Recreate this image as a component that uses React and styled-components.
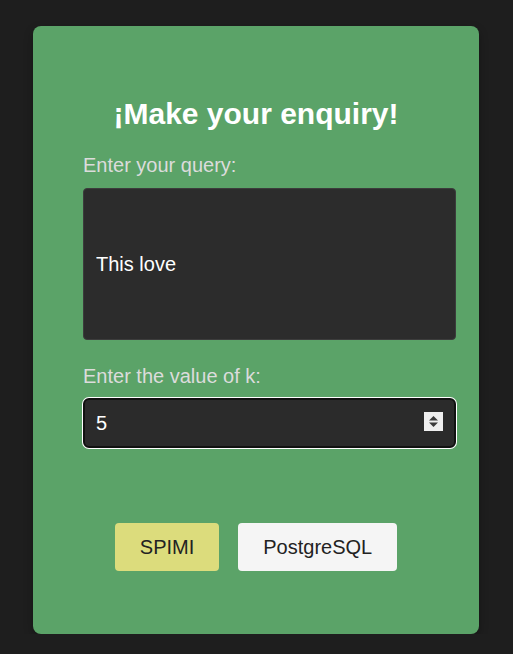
import React, {useState} from 'react';
import styled, {createGlobalStyle} from 'styled-components';

const GlobalStyle = createGlobalStyle`
  html, body, #root {
    min-height: 100%;
  }
  body {
    margin: 0;
    background: #1e1e1e;
    font-family: "Liberation Sans", Arial, sans-serif;
  }
`;

const Page = styled.div`
  display: flex;
  padding: 26px 0 0 33px;
`;

const Card = styled.div`
  width: 446px;
  box-sizing: border-box;
  padding: 71px 50px 63px;
  background: #5ba368;
  border-radius: 8px;
  box-shadow: 0 4px 10px rgba(0, 0, 0, 0.3);
  display: flex;
  flex-direction: column;
`;

const Title = styled.h1`
  margin: 0 0 23px;
  font-size: 30px;
  font-weight: bold;
  color: #fff;
  text-align: center;
  line-height: 34px;
`;

const Label = styled.label`
  font-size: 20px;
  line-height: 23px;
  color: #dcdcdc;
  margin-bottom: ${(props) => props.gap}px;
`;

// inputs spill past the right padding, as width: 100% plus their own padding does
const QueryBox = styled.input`
  box-sizing: border-box;
  width: calc(100% + 27px);
  height: 152px;
  margin: 0 0 25px;
  padding: 0 12px;
  background: #2c2c2c;
  border: 1px solid #3c3c3c;
  border-radius: 4px;
  color: #fff;
  font-family: inherit;
  font-size: 20px;
  outline: none;
`;

const Field = styled.div`
  position: relative;
  width: calc(100% + 27px);
`;

const NumberBox = styled.input`
  box-sizing: border-box;
  width: 100%;
  height: 50px;
  margin: 0;
  padding: 0 11px;
  background: #2b2b2b;
  border: 2px solid #111;
  border-radius: 6px;
  box-shadow: 0 0 0 1px #fff;
  color: #fff;
  font-family: inherit;
  font-size: 20px;
  outline: none;
  -moz-appearance: textfield;

  &::-webkit-inner-spin-button,
  &::-webkit-outer-spin-button {
    -webkit-appearance: none;
    margin: 0;
  }
`;

const Spinner = styled.div`
  position: absolute;
  right: 13px;
  top: 14px;
  width: 19px;
  height: 19px;
  background: #efefef;
  display: flex;
  align-items: center;
  justify-content: center;
`;

const Actions = styled.div`
  display: flex;
  justify-content: center;
  gap: 19px;
  margin-top: 75px;
`;

const Button = styled.button`
  height: 48px;
  padding: 0 25px;
  border: none;
  border-radius: 4px;
  background: ${(props) => (props.active ? '#dcdc7c' : '#f5f5f5')};
  color: #222;
  font-family: inherit;
  font-size: 20px;
  cursor: pointer;
`;

const App = () => {
  const [query, setQuery] = useState('This love');
  const [k, setK] = useState(5);
  const [engine, setEngine] = useState('SPIMI');

  return (
    <Page>
      <GlobalStyle />
      <Card>
        <Title>¡Make your enquiry!</Title>
        <Label gap={11}>Enter your query:</Label>
        <QueryBox value={query} onChange={(e) => setQuery(e.target.value)} />
        <Label gap={10}>Enter the value of k:</Label>
        <Field>
          <NumberBox type="number" value={k} onChange={(e) => setK(e.target.value)} />
          <Spinner>
            <svg width="11" height="13" viewBox="0 0 11 13">
              <path d="M5.5 1 L10 5.5 L1 5.5 Z" fill="#3b3b3b" />
              <path d="M1 7.5 L10 7.5 L5.5 12 Z" fill="#3b3b3b" />
            </svg>
          </Spinner>
        </Field>
        <Actions>
          <Button active={engine === 'SPIMI'} onClick={() => setEngine('SPIMI')}>SPIMI</Button>
          <Button onClick={() => setEngine('PostgreSQL')}>PostgreSQL</Button>
        </Actions>
      </Card>
    </Page>
  );
};

export default App;
